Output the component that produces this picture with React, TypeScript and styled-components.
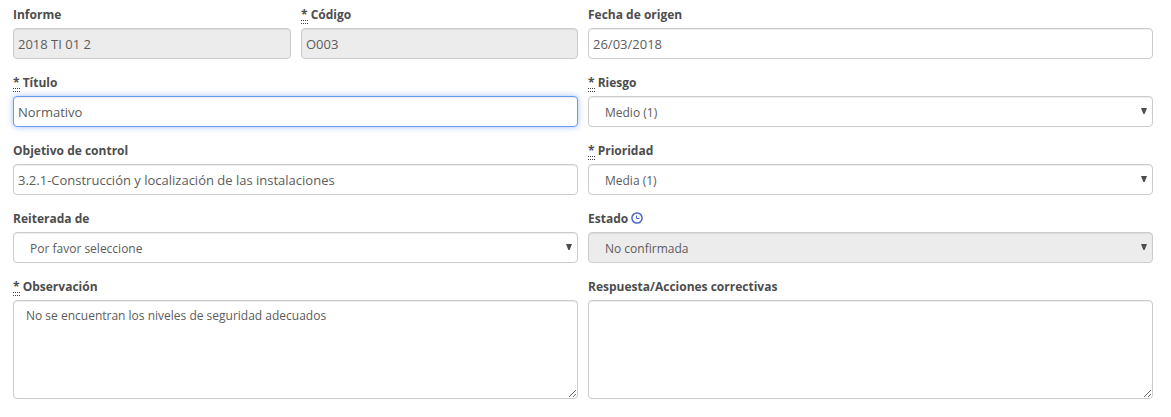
import React from "react";
import styled, { createGlobalStyle, css } from "styled-components";

const GlobalStyle = createGlobalStyle`
  *, *::before, *::after { box-sizing: border-box; }
  body {
    margin: 0;
    background: #fff;
    color: #4d4d4d;
    font: 12px/17px "Open Sans", "Noto Sans", sans-serif;
  }
`;

const Form = styled.form`
  display: grid;
  grid-template-columns: 565px 565px;
  column-gap: 10px;
  row-gap: 15px;
  padding: 6px 18px 0 13px;
`;

const Pair = styled.div`
  display: grid;
  grid-template-columns: 278px 277px;
  column-gap: 10px;
`;

const Group = styled.div`
  display: flex;
  flex-direction: column;
  min-width: 0;
`;

const Label = styled.label`
  display: flex;
  align-items: flex-start;
  height: 17px;
  margin-bottom: 5px;
  font-weight: 700;
  white-space: pre;
`;

const Required = styled.abbr`
  height: 18px;
  line-height: 17px;
  text-decoration: none;
  background: repeating-linear-gradient(90deg, #444 0 1px, transparent 1px 2px) 0 14px / 100% 1px no-repeat,
    repeating-linear-gradient(90deg, #444 0 1px, transparent 1px 2px) 0 17px / 100% 1px no-repeat;
`;

const control = css`
  display: block;
  width: 100%;
  margin: 0;
  border: 1px solid #ccc;
  border-radius: 4px;
  background-color: #fff;
  box-shadow: inset 0 1px 1px rgba(0, 0, 0, 0.075);
  color: #5c5c5c;
  font-family: inherit;
  outline: none;
  opacity: 1;
`;

const Input = styled.input<{ $active?: boolean }>`
  ${control}
  height: 31px;
  padding: 1px 4px 0;
  font-size: 13px;
  &:disabled { background-color: #ececec; }
  ${(p) =>
    p.$active &&
    css`
      border-color: #6b98f0;
      box-shadow: inset 0 1px 1px rgba(0, 0, 0, 0.075), 0 0 6px rgba(107, 152, 240, 0.6);
    `}
`;

const SelectFrame = styled.div`
  position: relative;
`;

const Select = styled.select`
  ${control}
  appearance: none;
  height: 31px;
  padding: 1px 24px 0 16px;
  font-size: 12px;
  &:disabled { background-color: #ececec; }
`;

const Arrow = styled.svg`
  position: absolute;
  top: 12px;
  right: 6px;
  width: 6px;
  height: 6px;
  fill: #4d4d4d;
  pointer-events: none;
`;

const TextArea = styled.textarea`
  ${control}
  height: 99px;
  padding: 6px 12px;
  font-size: 12px;
  line-height: 17px;
  resize: vertical;
`;

const Clock = styled.svg`
  width: 12px;
  height: 12px;
  margin: 2px 0 0 3px;
  fill: none;
  stroke: #4a68cc;
`;

type FieldProps = { label: string; required?: boolean; icon?: React.ReactNode; children: React.ReactNode };

const Field = ({ label, required, icon, children }: FieldProps) => (
  <Group>
    <Label>
      {required && <Required>*</Required>}
      {required ? ` ${label}` : label}
      {icon}
    </Label>
    {children}
  </Group>
);

const Dropdown = ({ value, disabled }: { value: string; disabled?: boolean }) => (
  <SelectFrame>
    <Select defaultValue={value} disabled={disabled}>
      <option>{value}</option>
    </Select>
    <Arrow viewBox="0 0 6 6">
      <path d="M0 0h6L3.6 6H2.4Z" />
    </Arrow>
  </SelectFrame>
);

const ClockIcon = () => (
  <Clock viewBox="0 0 12 12">
    <circle cx="6" cy="6" r="5.1" strokeWidth="1.5" />
    <path d="M5.5 3.5v3h3" strokeWidth="1" />
  </Clock>
);

export default function App() {
  return (
    <>
      <GlobalStyle />
      <Form>
        <Pair>
          <Field label="Informe">
            <Input defaultValue="2018 TI 01 2" disabled />
          </Field>
          <Field label="Código" required>
            <Input defaultValue="O003" disabled />
          </Field>
        </Pair>
        <Field label="Fecha de origen">
          <Input defaultValue="26/03/2018" />
        </Field>
        <Field label="Título" required>
          <Input defaultValue="Normativo" $active />
        </Field>
        <Field label="Riesgo" required>
          <Dropdown value="Medio (1)" />
        </Field>
        <Field label="Objetivo de control">
          <Input defaultValue="3.2.1-Construcción y localización de las instalaciones" />
        </Field>
        <Field label="Prioridad" required>
          <Dropdown value="Media (1)" />
        </Field>
        <Field label="Reiterada de">
          <Dropdown value="Por favor seleccione" />
        </Field>
        <Field label="Estado" icon={<ClockIcon />}>
          <Dropdown value="No confirmada" disabled />
        </Field>
        <Field label="Observación" required>
          <TextArea defaultValue="No se encuentran los niveles de seguridad adecuados" />
        </Field>
        <Field label="Respuesta/Acciones correctivas">
          <TextArea />
        </Field>
      </Form>
    </>
  );
}
